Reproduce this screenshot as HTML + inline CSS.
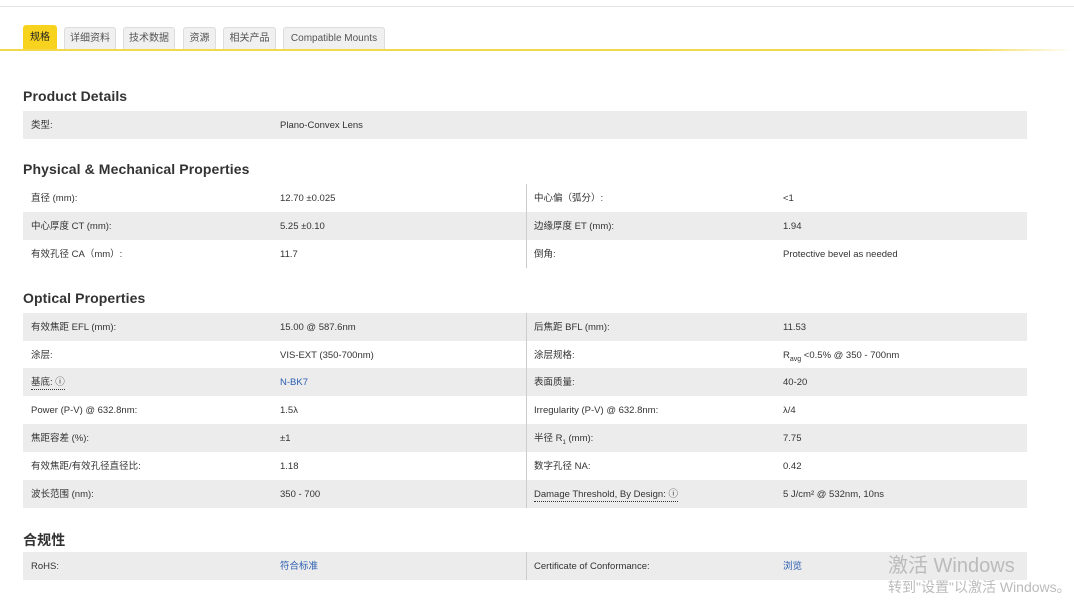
<!DOCTYPE html>
<html><head><meta charset="utf-8"><style>
*{margin:0;padding:0;box-sizing:border-box}
body{width:1074px;height:606px;background:#fff;position:relative;overflow:hidden;font-family:"Liberation Sans","Noto Sans CJK SC",sans-serif;color:#333;font-size:10px}
.a{position:absolute;white-space:nowrap}
.tab{position:absolute;top:27px;height:22px;background:#f0f0f0;border:1px solid #ddd;border-bottom:none;border-radius:3px 3px 0 0;font-size:10px;color:#555;line-height:21px;text-align:center}
.h{position:absolute;left:23px;font-weight:bold;font-size:14px;color:#333;letter-spacing:.1px}
.r{position:absolute;left:23px;width:1004px;height:28px}
.g{background:#ececec}
.r span{position:absolute;top:1px;line-height:28px;font-size:9.5px;color:#333}
.l1{left:8px}.v1{left:257px}.l2{left:511px}.v2{left:760px}
.lk{color:#2a5db0!important}
.vd{position:absolute;left:526px;width:1px;background:#ccc}
.u{border-bottom:1px dotted #333;line-height:12px!important;top:9px!important}
</style></head><body>
<div class="a" style="left:0;top:6px;width:1074px;height:1px;background:#e4e4e4"></div>
<div class="tab" style="left:23px;top:25px;width:34px;height:24px;background:#f7d21e;border-color:#f7d21e;color:#222;line-height:24px">规格</div>
<div class="tab" style="left:64px;width:52px">详细资料</div>
<div class="tab" style="left:123px;width:52px">技术数据</div>
<div class="tab" style="left:183px;width:33px">资源</div>
<div class="tab" style="left:223px;width:53px">相关产品</div>
<div class="tab" style="left:283px;width:102px">Compatible Mounts</div>
<div class="a" style="left:0;top:49px;width:1074px;height:2px;background:linear-gradient(to right,#f2d84a 0,#f2d84a 90%,#fff 100%)"></div>

<div class="h" style="top:88px">Product Details</div>
<div class="r g" style="top:111px"><span class="l1">类型:</span><span class="v1">Plano-Convex Lens</span></div>

<div class="h" style="top:161px">Physical &amp; Mechanical Properties</div>
<div class="r" style="top:184px"><span class="l1">直径 (mm):</span><span class="v1">12.70 ±0.025</span><span class="l2">中心偏（弧分）:</span><span class="v2">&lt;1</span></div>
<div class="r g" style="top:212px"><span class="l1">中心厚度 CT (mm):</span><span class="v1">5.25 ±0.10</span><span class="l2">边缘厚度 ET (mm):</span><span class="v2">1.94</span></div>
<div class="r" style="top:240px"><span class="l1">有效孔径 CA（mm）:</span><span class="v1">11.7</span><span class="l2">倒角:</span><span class="v2">Protective bevel as needed</span></div>
<div class="vd" style="top:184px;height:84px"></div>

<div class="h" style="top:290px">Optical Properties</div>
<div class="r g" style="top:313px"><span class="l1">有效焦距 EFL (mm):</span><span class="v1">15.00 @ 587.6nm</span><span class="l2">后焦距 BFL (mm):</span><span class="v2">11.53</span></div>
<div class="r" style="top:341px"><span class="l1">涂层:</span><span class="v1">VIS-EXT (350-700nm)</span><span class="l2">涂层规格:</span><span class="v2">R<sub style="font-size:7px">avg</sub> &lt;0.5% @ 350 - 700nm</span></div>
<div class="r g" style="top:368px"><span class="l1 u">基底: ⓘ</span><span class="v1 lk">N-BK7</span><span class="l2">表面质量:</span><span class="v2">40-20</span></div>
<div class="r" style="top:396px"><span class="l1">Power (P-V) @ 632.8nm:</span><span class="v1">1.5λ</span><span class="l2">Irregularity (P-V) @ 632.8nm:</span><span class="v2">λ/4</span></div>
<div class="r g" style="top:424px"><span class="l1">焦距容差 (%):</span><span class="v1">±1</span><span class="l2">半径 R<sub style="font-size:6px">1</sub> (mm):</span><span class="v2">7.75</span></div>
<div class="r" style="top:452px"><span class="l1">有效焦距/有效孔径直径比:</span><span class="v1">1.18</span><span class="l2">数字孔径 NA:</span><span class="v2">0.42</span></div>
<div class="r g" style="top:480px"><span class="l1">波长范围 (nm):</span><span class="v1">350 - 700</span><span class="l2 u">Damage Threshold, By Design: ⓘ</span><span class="v2">5 J/cm² @ 532nm, 10ns</span></div>
<div class="vd" style="top:313px;height:195px"></div>

<div class="h" style="top:530px">合规性</div>
<div class="r g" style="top:552px"><span class="l1">RoHS:</span><span class="v1 lk">符合标准</span><span class="l2">Certificate of Conformance:</span><span class="v2 lk">浏览</span></div>
<div class="vd" style="top:552px;height:28px"></div>

<div class="a" style="left:888px;top:549px;font-size:20px;color:#bbb">激活 Windows</div>
<div class="a" style="left:888px;top:577px;font-size:14px;color:#bbb">转到"设置"以激活 Windows。</div>
</body></html>
